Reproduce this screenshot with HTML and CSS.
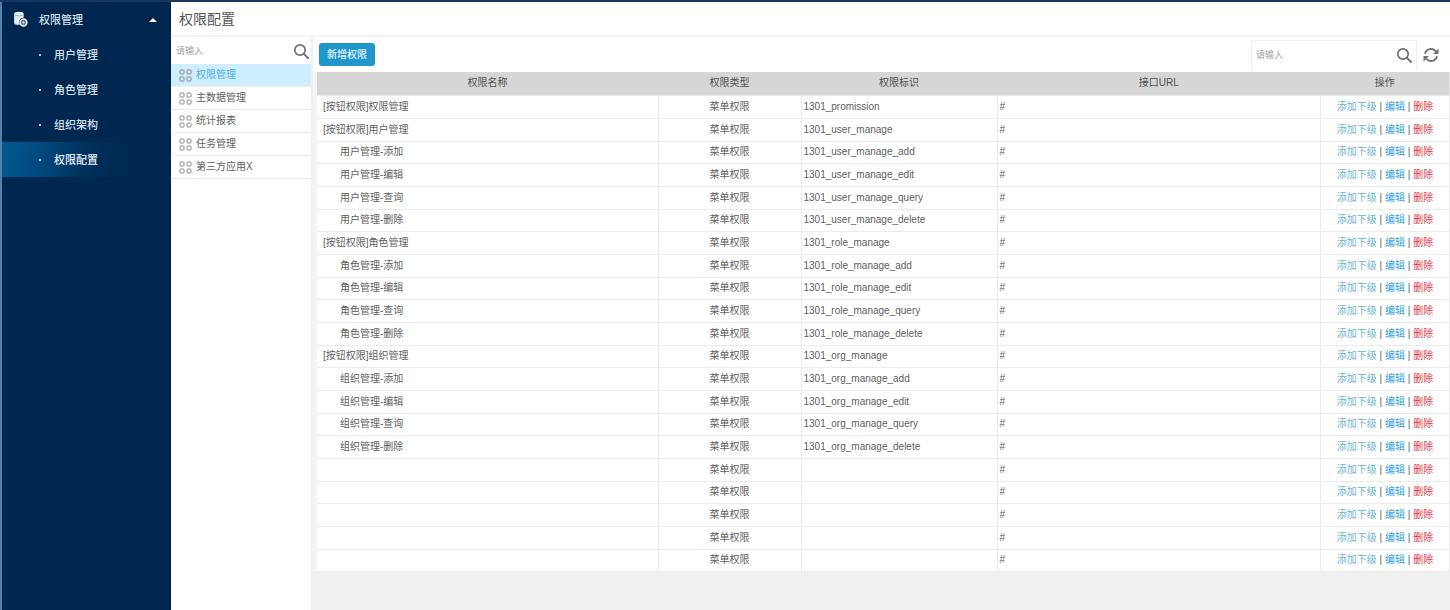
FILE: index.html
```
<!DOCTYPE html>
<html lang="zh-CN">
<head>
<meta charset="utf-8">
<title>权限配置</title>
<link rel="stylesheet" href="styles.css">
</head>
<body>
<svg class="sprite" aria-hidden="true">
  <symbol id="i-search" viewBox="0 0 16 16"><circle cx="7" cy="7" r="5.2" fill="none" stroke="currentColor" stroke-width="1.7"/><path d="M10.8 10.8 15 15" stroke="currentColor" stroke-width="1.9" stroke-linecap="round"/></symbol>
  <symbol id="i-grid" viewBox="0 0 13 13"><g fill="none" stroke="currentColor" stroke-width="1"><rect x="1" y="1" width="4" height="4" rx=".6"/><rect x="8" y="1" width="4" height="4" rx=".6"/><rect x="1" y="8" width="4" height="4" rx=".6"/><rect x="8" y="8" width="4" height="4" rx=".6"/></g></symbol>
</svg>
<div class="app">
  <nav class="sidebar" aria-label="主菜单">
    <button class="group" type="button" aria-expanded="true">
      <svg class="group-icon" viewBox="0 0 14 16" aria-hidden="true"><path d="M1 2.5Q1 .8 5.500.8T10 2.500V6Q6 6.500 5.500 10.500L6.500 13H3Q1 13 1 11Z" fill="#e6edf4"/><path d="M1.500 3.800Q5.500 5.500 10 3.800" fill="none" stroke="#8fa9c2" stroke-width=".8"/><circle cx="9.800" cy="10.800" r="3.200" fill="#5f7f9f" stroke="#e6edf4" stroke-width="1.500"/><circle cx="9.800" cy="10.800" r="1" fill="#e6edf4"/></svg>
      <span class="group-name">权限管理</span>
      <svg class="caret" viewBox="0 0 8 4" aria-hidden="true"><path d="M0 4 4 0l4 4z" fill="#fff"/></svg>
    </button>
    <ul class="menu">
      <li><a href="#user">用户管理</a></li>
      <li><a href="#role">角色管理</a></li>
      <li><a href="#org">组织架构</a></li>
      <li><a class="active" href="#permission" aria-current="page">权限配置</a></li>
    </ul>
  </nav>
  <main class="main">
    <header class="title-bar"><h1>权限配置</h1></header>
    <div class="body">
      <aside class="tree">
        <form class="tree-search">
          <input type="text" placeholder="请输入" aria-label="搜索应用">
          <button type="button" aria-label="搜索"><svg class="icon"><use href="#i-search"/></svg></button>
        </form>
        <ul class="tree-list">
          <li><a class="active" href="#t1"><svg class="grid-icon"><use href="#i-grid"/></svg>权限管理</a></li>
          <li><a href="#t2"><svg class="grid-icon"><use href="#i-grid"/></svg>主数据管理</a></li>
          <li><a href="#t3"><svg class="grid-icon"><use href="#i-grid"/></svg>统计报表</a></li>
          <li><a href="#t4"><svg class="grid-icon"><use href="#i-grid"/></svg>任务管理</a></li>
          <li><a href="#t5"><svg class="grid-icon"><use href="#i-grid"/></svg>第三方应用X</a></li>
        </ul>
      </aside>
      <section class="content">
        <div class="toolbar">
          <button class="add" type="button">新增权限</button>
          <form class="search">
            <input type="text" placeholder="请输入" aria-label="搜索权限">
            <button type="button" aria-label="搜索"><svg class="icon"><use href="#i-search"/></svg></button>
          </form>
          <button class="refresh" type="button" aria-label="刷新"><svg class="icon" viewBox="0 0 16 16"><path d="M2 6.800A6.200 6.200 0 0 1 13 4.500M14 9.200A6.200 6.200 0 0 1 3 11.500" fill="none" stroke="currentColor" stroke-width="1.900"/><path d="M15.500 1.500V7H10zM.5 14.500V9H6z" fill="currentColor"/></svg></button>
        </div>
        <table class="table">
          <colgroup><col class="c-name"><col class="c-type"><col class="c-key"><col class="c-url"><col class="c-act"></colgroup>
          <thead><tr><th>权限名称</th><th>权限类型</th><th>权限标识</th><th>接口URL</th><th>操作</th></tr></thead>
          <tbody id="rows"></tbody>
        </table>
      </section>
    </div>
  </main>
</div>
<script src="rows.js"></script>
</body>
</html>
```
FILE: rows.js
```
const groups = [['用户管理', 'user'], ['角色管理', 'role'], ['组织管理', 'org']];
const actions = [['添加', 'add'], ['编辑', 'edit'], ['查询', 'query'], ['删除', 'delete']];
const rows = [['[按钮权限]权限管理', '1301_promission', false]];
for (const [name, key] of groups) {
  rows.push([`[按钮权限]${name}`, `1301_${key}_manage`, false]);
  for (const [label, action] of actions) {
    rows.push([`${name}-${label}`, `1301_${key}_manage_${action}`, true]);
  }
}
for (let i = 0; i < 5; i++) rows.push(['', '', false]);

document.getElementById('rows').innerHTML = rows.map(([name, key, child]) => `
  <tr>
    <td class="${child ? 'name child' : 'name'}">${name}</td>
    <td class="type">菜单权限</td>
    <td>${key}</td>
    <td class="url">#</td>
    <td class="ops"><a class="op-add" href="#add">添加下级</a> | <a class="op-edit" href="#edit">编辑</a> | <a class="op-del" href="#del">删除</a></td>
  </tr>`).join('');
```
FILE: styles.css
```
* { box-sizing: border-box; }
body {
  margin: 0;
  font: 10px/14px "Liberation Sans", "Noto Sans CJK SC", sans-serif;
  color: #606060;
  background: #fff;
}
ul { margin: 0; padding: 0; list-style: none; }
a { text-decoration: none; color: inherit; }
button, input { font: inherit; color: inherit; border: 0; background: none; padding: 0; margin: 0; }
button { cursor: pointer; }
input { min-width: 0; outline: 0; }
input::placeholder { color: #a3a3a3; opacity: 1; }
.sprite { display: none; }
.icon { display: block; width: 16px; height: 16px; color: #707070; }

.app { display: flex; min-height: 100vh; border-top: 2px solid #143660; }

.sidebar { flex: 0 0 171px; background: #00274f; border-left: 2px solid #5580a8; color: #d5dfe9; font-size: 11px; }
.group { display: flex; align-items: center; width: 100%; height: 35px; padding: 0 14px 0 11px; text-align: left; }
.group-icon { width: 15px; height: 17px; margin-right: 11px; }
.group-name { flex: 1; font-weight: 500; }
.caret { width: 8px; height: 4px; }
.menu a { display: flex; align-items: center; height: 35px; padding-left: 37px; font-weight: 500; }
.menu a::before { content: ""; width: 2px; height: 2px; margin-right: 13px; background: #a9bccf; }
.menu .active { color: #e6eef5; background: linear-gradient(100deg, #005a93 0%, #00487d 25%, #00305c 50%, #00274f 75%); }

.main { flex: 1; min-width: 0; display: flex; flex-direction: column; }
.title-bar { height: 35px; padding: 0 8px; display: flex; align-items: center; border-bottom: 2px solid #f3f3f3; }
h1 { margin: 0; font-size: 14px; line-height: 20px; font-weight: 400; color: #555; }
.body { flex: 1; display: flex; }

.tree { flex: 0 0 140px; }
.tree-search { display: flex; align-items: center; height: 27px; padding: 0 2px 0 5px; }
.tree-search input { flex: 1; font-size: 9px; }
.tree-list a { display: flex; align-items: center; gap: 4px; height: 23px; padding-left: 8px; border-bottom: 1px solid #ececec; }
.tree-list .active { background: #cfeefd; color: #48b2ec; }
.grid-icon { width: 13px; height: 13px; color: #8b8b8b; }

.content { flex: 1; min-width: 0; background: #f0f0f0; border-left: 2px solid #f0f0f0; }
.toolbar { display: flex; align-items: center; height: 35px; padding: 0 11px 0 6px; background: #fff; }
.add { height: 23px; padding: 0 8px; border-radius: 3px; background: #2097cb; color: #e4f5fd; font-weight: 500; }
.search { display: flex; align-items: center; width: 166px; height: 30px; margin-left: auto; padding: 0 4px; border: 1px solid #f0f0f0; border-width: 1px 1px 0 1px; }
.search input { flex: 1; font-size: 9px; }
.refresh { margin-left: 6px; }

.table { width: 100%; table-layout: fixed; border-collapse: collapse; background: #fff; border-left: 4px solid #f5f5f5; border-right: 1px solid #e8e8e8; }
.c-name { width: 343px; }
.c-type { width: 143px; }
.c-key { width: 196px; }
.c-act { width: 129px; }
th { height: 23px; padding: 0; background: #d6d6d6; font-weight: 400; color: #505050; }
td { height: 23px; padding: 0 2px; border: 1px solid #ebebeb; white-space: nowrap; }
tr:nth-child(3n) td { height: 22px; }
.name { padding-left: 6px; }
.child { padding-left: 23px; }
.type, .ops { text-align: center; }
.op-add { color: #6bb5cb; }
.op-edit { color: #2f9fdc; }
.op-del { color: #e0404c; }
```
